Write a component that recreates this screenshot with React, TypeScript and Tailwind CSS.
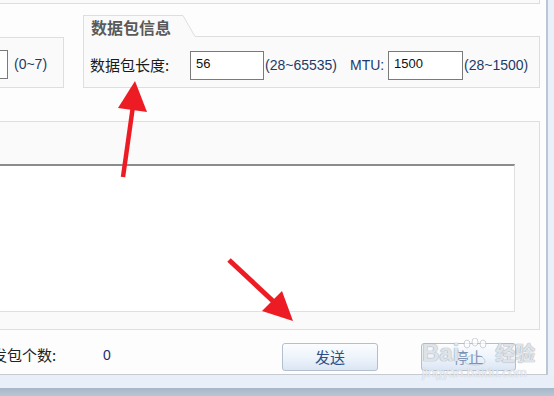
import React from "react";

const cjk = { fontFamily: '"Noto Sans CJK SC", "Noto Sans", sans-serif' };
const latin = { fontFamily: '"Liberation Sans", Arial, sans-serif' };

function Field({ value, className }: { value: string; className: string }) {
  return (
    <div
      className={`h-[29px] shrink-0 border border-[#7a7a7a] bg-white pl-[5px] pt-[3px] text-[13px] leading-[18px] text-[#111] ${className}`}
      style={latin}
    >
      {value}
    </div>
  );
}

function Button({ label, dim = false, className }: { label: string; dim?: boolean; className: string }) {
  return (
    <div
      className={`flex h-[28px] shrink-0 items-center justify-center rounded-[3px] border border-[#b3bfcd] bg-gradient-to-b from-[#fbfdff] via-[#eef4fb] to-[#dbe6f4] text-[15px] ${
        dim ? "text-[#7d93b3]" : "text-[#2b4f88]"
      } ${className}`}
      style={cjk}
    >
      {label}
    </div>
  );
}

export default function App() {
  return (
    <div className="relative flex h-[396px] w-[554px] flex-col overflow-hidden bg-[#e9f0fa]">
      {/* dialog client area */}
      <div className="flex h-[375px] w-[548px] shrink-0 flex-col overflow-hidden border-r-2 border-b border-r-[#bcc7d4] border-b-[#c6cbd2] bg-[#fdfdfd]">
        {/* bottom edge of the group above */}
        <div className="h-[4px] w-[540px] shrink-0 border-r border-b border-[#dedede] bg-[#fafafa]" />

        {/* option groups */}
        <div className="mt-[11px] flex h-[73px] shrink-0 items-start">
          <div className="mt-[22px] flex h-[51px] w-[64px] shrink-0 items-start border-t border-r border-b border-[#dedede] bg-[#fafafa] pt-[12px]">
            <Field value="" className="-ml-[53px] w-[61px]" />
            <span className="ml-[6px] mt-[4px] text-[14px] text-[#1d3a68]" style={latin}>
              (0~7)
            </span>
          </div>

          <div className="ml-[19px] flex w-[457px] shrink-0 flex-col">
            <div className="flex h-[22px]">
              <div
                className="h-[22px] w-[99px] shrink-0 border-t border-l border-[#dedede] bg-[#fafafa] pl-[7px] text-[16px] font-bold leading-[22px] text-[#5a5a5a]"
                style={cjk}
              >
                数据包信息
              </div>
              <svg width="14" height="22" viewBox="0 0 14 22" className="shrink-0">
                <polygon points="0,0 1,0 13,21 14,22 0,22" fill="#fafafa" />
                <polyline points="0,0.5 1,0.5 13,21.5 14,21.5" fill="none" stroke="#dedede" strokeWidth="1" />
              </svg>
              <div className="h-[22px] flex-1 border-b border-[#dedede]" />
            </div>
            <div className="flex h-[51px] items-center border-r border-b border-l border-[#dedede] bg-[#fafafa] pt-[7px] pl-[6px]">
              <span className="w-[100px] shrink-0 text-[15px] text-[#1a1a1a]" style={cjk}>
                数据包长度:
              </span>
              <Field value="56" className="w-[74px]" />
              <span className="ml-[1px] w-[85px] shrink-0 text-[14px] text-[#1d3a68]" style={latin}>
                (28~65535)
              </span>
              <span className="w-[38px] shrink-0 text-[14px] text-[#1d3a68]" style={latin}>
                MTU:
              </span>
              <Field value="1500" className="w-[75px]" />
              <span className="ml-[1px] text-[14px] text-[#1d3a68]" style={latin}>
                (28~1500)
              </span>
            </div>
          </div>
        </div>

        {/* output group */}
        <div className="mt-[33px] h-[209px] w-[540px] shrink-0 border-t border-r border-b border-[#dedede] bg-[#fafafa] pt-[42px]">
          <div className="h-[148px] w-[515px] border-t-2 border-r border-b border-t-[#8c8c8c] border-r-[#e0e0e0] border-b-[#e0e0e0] bg-white" />
        </div>

        {/* counter + buttons */}
        <div className="flex h-[44px] shrink-0 items-start pt-[13px]">
          <span className="-ml-[8px] w-[111px] shrink-0 pt-[1px] text-[15px] leading-[22px] text-[#222]" style={cjk}>
            发包个数:
          </span>
          <span className="w-[179px] shrink-0 pt-[1px] text-[14px] leading-[22px] text-[#1d2d6b]" style={latin}>
            0
          </span>
          <Button label="发送" className="w-[96px]" />
          <Button label="停止" dim className="ml-[43px] w-[95px]" />
        </div>
      </div>
      <div className="h-[13px] w-full shrink-0 bg-[#e8eff9]" />
      <div className="h-[8px] w-full shrink-0 bg-gradient-to-b from-[#a7b6c7] to-[#b9c6d4]" />

      {/* watermark */}
      <div className="pointer-events-none absolute left-[422px] top-[338px] flex flex-col items-start">
        <div className="flex items-center">
          <span
            className="text-[24px] font-bold leading-[30px] text-white/70"
            style={{ ...latin, textShadow: "0 0 1px #9aa6b4, 0 0 1px #9aa6b4" }}
          >
            Bai
          </span>
          <svg width="34" height="30" viewBox="0 0 34 30" className="opacity-70">
            <g fill="white" stroke="#a9b3bf" strokeWidth="0.8">
              <ellipse cx="8" cy="6" rx="3" ry="4" />
              <ellipse cx="16" cy="4" rx="3" ry="4" />
              <ellipse cx="24" cy="6" rx="3" ry="4" />
              <path d="M6 24 C6 15 26 15 26 24 C26 28 6 28 6 24 Z" fill="none" />
            </g>
          </svg>
          <span
            className="ml-[2px] text-[20px] font-bold leading-[30px] text-white/70"
            style={{ ...cjk, textShadow: "0 0 1px #9aa6b4, 0 0 1px #9aa6b4" }}
          >
            经验
          </span>
        </div>
        <span
          className="-mt-[2px] text-[13px] leading-[14px] text-white/70"
          style={{ ...latin, textShadow: "0 0 1px #a9b3bf" }}
        >
          jingyan.baidu.com
        </span>
      </div>

      {/* red annotation arrows */}
      <svg width="554" height="396" className="pointer-events-none absolute left-0 top-0">
        <g fill="#ed1c24" stroke="#ed1c24">
          <line x1="123" y1="177" x2="133" y2="106" strokeWidth="4.5" />
          <polygon points="135,81 118,108 147,112" strokeWidth="0" />
          <line x1="229" y1="260" x2="274" y2="302" strokeWidth="5" />
          <polygon points="293,321 262,311 282,291" strokeWidth="0" />
        </g>
      </svg>
    </div>
  );
}
